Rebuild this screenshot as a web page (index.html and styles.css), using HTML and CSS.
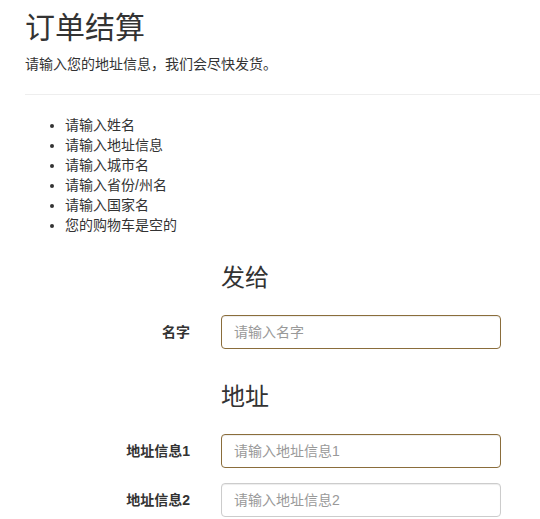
FILE: index.html
```html
<!DOCTYPE html>
<html lang="zh-CN">
<head>
<meta charset="utf-8">
<title>订单结算</title>
<link rel="stylesheet" href="styles.css">
</head>
<body>
<div class="page">
  <h1 class="title">订单结算</h1>
  <p class="lead">请输入您的地址信息，我们会尽快发货。</p>
  <hr class="divider">
  <ul class="errors">
    <li>请输入姓名</li>
    <li>请输入地址信息</li>
    <li>请输入城市名</li>
    <li>请输入省份/州名</li>
    <li>请输入国家名</li>
    <li>您的购物车是空的</li>
  </ul>
  <form class="form">
    <h3 class="section">发给</h3>
    <div class="group">
      <label class="label">名字</label>
      <input class="input warn" type="text" placeholder="请输入名字">
    </div>
    <h3 class="section">地址</h3>
    <div class="group">
      <label class="label">地址信息1</label>
      <input class="input warn" type="text" placeholder="请输入地址信息1">
    </div>
    <div class="group">
      <label class="label">地址信息2</label>
      <input class="input" type="text" placeholder="请输入地址信息2">
    </div>
  </form>
</div>
</body>
</html>
```

FILE: styles.css
```css
html, body {
  margin: 0;
  padding: 0;
  background: #fff;
}
body {
  font-family: "Liberation Sans", Arial, "Noto Sans CJK SC", sans-serif;
  font-size: 14px;
  line-height: 20px;
  color: #333;
}
.page {
  padding-left: 25px;
}
.title {
  font-size: 30px;
  font-weight: 400;
  line-height: 33px;
  margin: 11px 0 10px;
  color: #333;
}
.lead {
  margin: 0 0 10px;
}
.divider {
  margin: 20px 0;
  border: 0;
  border-top: 1px solid #eee;
  height: 0;
}
.errors {
  margin: 0 0 10px;
  padding-left: 40px;
}
.form {
  display: flex;
  flex-direction: column;
}
.section {
  font-size: 24px;
  font-weight: 400;
  line-height: 26px;
  margin: 20px 0 24px 196px;
  color: #333;
}
.group {
  display: flex;
  align-items: flex-start;
  margin-bottom: 15px;
}
.label {
  width: 165px;
  text-align: right;
  font-weight: 700;
  padding-top: 7px;
  line-height: 20px;
  margin-right: 31px;
}
.input {
  box-sizing: border-box;
  width: 280px;
  height: 34px;
  padding: 6px 12px;
  font-family: "Liberation Sans", Arial, "Noto Sans CJK SC", sans-serif;
  font-size: 14px;
  line-height: 20px;
  color: #555;
  background: #fff;
  border: 1px solid #ccc;
  border-radius: 4px;
  box-shadow: inset 0 1px 1px rgba(0,0,0,.075);
  outline: none;
}
.input::placeholder {
  color: #999;
}
.input.warn {
  border-color: #8a6d3b;
}
```
